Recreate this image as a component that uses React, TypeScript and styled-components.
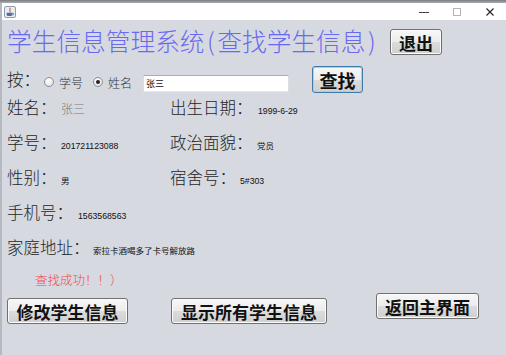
import React from "react"
import styled, { createGlobalStyle } from "styled-components"

const GlobalStyle = createGlobalStyle`
	html, body {
		margin: 0;
		padding: 0;
		background: #d6d9e0;
	}
	body {
		font-family: "Noto Sans CJK SC", sans-serif;
	}
	* {
		box-sizing: border-box;
	}
`

const CJK = `"Noto Sans CJK SC", sans-serif`
const LATIN = `"Liberation Sans", "Noto Sans CJK SC", sans-serif`

const Frame = styled.div`
	width: 506px;
	height: 355px;
	display: flex;
	flex-direction: column;
	overflow: hidden;
	background: #d6d9e0;
`

const TopStrip = styled.div`
	height: 3px;
	background: linear-gradient(#7a7d82, #a9acb1);
`

const Body = styled.div`
	flex: 1;
	display: flex;
	flex-direction: column;
	border-left: 2px solid #b6b9c0;
`

const TitleBar = styled.div`
	height: 17px;
	display: flex;
	align-items: center;
	justify-content: space-between;
	background: #ffffff;
	padding: 0 11px 0 2px;
`

const Controls = styled.div`
	display: flex;
	align-items: center;
	gap: 23px;
`

const Content = styled.div`
	flex: 1;
	display: flex;
	flex-direction: column;
	padding-left: 5px;
`

const HeaderRow = styled.div`
	height: 40px;
	display: flex;
	align-items: center;
`

const Title = styled.div`
	width: 383px;
	font-family: ${CJK};
	font-size: 24.7px;
	font-weight: 300;
	line-height: 30px;
	color: #6a6af0;
	white-space: nowrap;
`

// the original font gives the ascii parens a wider box
const Paren = styled.span`
	margin: 0 2.5px;
`

const Button = styled.button<{ $w: number; $h?: number; $size?: number; $mt?: number; $ml?: number; $focus?: boolean }>`
	width: ${(p) => p.$w}px;
	height: ${(p) => p.$h ?? 26}px;
	margin-top: ${(p) => p.$mt ?? 0}px;
	margin-left: ${(p) => p.$ml ?? 0}px;
	padding: 0;
	display: flex;
	align-items: center;
	justify-content: center;
	font-family: ${CJK};
	font-size: ${(p) => p.$size ?? 17}px;
	font-weight: 700;
	color: #111;
	background: linear-gradient(#f7f7f7 0%, #ececec 50%, #dcdcdc 51%, #cfcfcf 100%);
	border: 1px solid ${(p) => (p.$focus ? "#3d7bad" : "#707070")};
	border-radius: 3px;
	box-shadow: ${(p) => (p.$focus ? "inset 0 0 0 1px #9fd3f2" : "inset 0 0 0 1px #fbfbfb")};
	white-space: nowrap;
`

const SearchRow = styled.div`
	height: 35px;
	padding-top: 4px;
	display: flex;
	align-items: center;
`

const Label = styled.span<{ $w: number }>`
	width: ${(p) => p.$w}px;
	flex: none;
	font-family: ${CJK};
	font-size: 16.5px;
	font-weight: 300;
	line-height: 25px;
	color: #262626;
	white-space: nowrap;
`

const RadioOption = styled.label<{ $w: number }>`
	width: ${(p) => p.$w}px;
	margin-top: 5px;
	display: flex;
	align-items: center;
	gap: 5px;
	font-family: ${CJK};
	font-size: 12px;
	font-weight: 300;
	color: #333;
	white-space: nowrap;
`

const RadioCircle = styled.span<{ $checked?: boolean }>`
	width: 10px;
	height: 10px;
	border-radius: 50%;
	border: 1px solid #8e8f8f;
	background: radial-gradient(circle at 40% 35%, #ffffff 0%, #e6e6e6 70%, #d0d0d0 100%);
	display: flex;
	align-items: center;
	justify-content: center;
	&::after {
		content: "";
		width: 4px;
		height: 4px;
		border-radius: 50%;
		background: ${(p) => (p.$checked ? "#222" : "transparent")};
	}
`

const TextField = styled.div`
	width: 146px;
	height: 17px;
	margin-top: 8px;
	padding-left: 2px;
	display: flex;
	align-items: center;
	background: #ffffff;
	border: 1px solid #abadb3;
	border-left-color: #dadee3;
	border-right-color: #dadee3;
	border-bottom-color: #e3e9ef;
	font-family: ${CJK};
	font-size: 9px;
	color: #111;
`

const InfoRow = styled.div`
	height: 35px;
	display: flex;
	align-items: baseline;
`

const Cell = styled.div<{ $w?: number }>`
	width: ${(p) => (p.$w ? `${p.$w}px` : "auto")};
	flex: none;
	display: flex;
	align-items: baseline;
`

const Value = styled.span<{ $muted?: boolean; $latin?: boolean }>`
	font-family: ${(p) => (p.$latin ? LATIN : CJK)};
	font-size: ${(p) => (p.$muted ? 12 : p.$latin ? 8.7 : 8.5)}px;
	font-weight: ${(p) => (p.$muted ? 300 : 400)};
	color: ${(p) => (p.$muted ? "#7a7a7a" : "#111")};
	white-space: nowrap;
`

const Message = styled.div`
	height: 20px;
	padding-left: 28px;
	font-family: ${CJK};
	font-size: 12.5px;
	font-weight: 300;
	line-height: 20px;
	color: #f24a4a;
`

const ButtonRow = styled.div`
	display: flex;
	align-items: flex-start;
`

const JavaIcon = () => (
	<svg width="12" height="12" viewBox="0 0 12 12">
		<rect x="0.5" y="0.5" width="11" height="11" rx="1.5" fill="#e9edf3" stroke="#8e9db2" />
		<path d="M5.5 1.8 C7.6 3.4 4.4 4.4 6.4 6.2" stroke="#e0701c" strokeWidth="1.2" fill="none" />
		<path d="M2.6 6.8 h5.6 v1.6 a1.6 1.6 0 0 1 -1.6 1.6 h-2.4 a1.6 1.6 0 0 1 -1.6 -1.6z" fill="#4f6f9e" />
		<path d="M8.2 7.2 h0.8 a0.8 0.8 0 0 1 0 1.6 h-0.8" stroke="#4f6f9e" strokeWidth="0.8" fill="none" />
	</svg>
)

const MinimizeIcon = () => (
	<svg width="10" height="10" viewBox="0 0 10 10">
		<line x1="0" y1="5.5" x2="10" y2="5.5" stroke="#444" strokeWidth="1" />
	</svg>
)

const MaximizeIcon = () => (
	<svg width="10" height="10" viewBox="0 0 10 10">
		<rect x="1.5" y="1.5" width="7" height="7" fill="none" stroke="#b5b5b5" strokeWidth="1" />
	</svg>
)

const CloseIcon = () => (
	<svg width="10" height="10" viewBox="0 0 10 10">
		<path d="M1.5 1.5 L8.5 8.5 M8.5 1.5 L1.5 8.5" stroke="#222" strokeWidth="1.1" />
	</svg>
)

export default function App() {
	return (
		<>
			<GlobalStyle />
			<Frame>
				<TopStrip />
				<Body>
					<TitleBar>
						<JavaIcon />
						<Controls>
							<MinimizeIcon />
							<MaximizeIcon />
							<CloseIcon />
						</Controls>
					</TitleBar>
					<Content>
						<HeaderRow>
							<Title>
								学生信息管理系统<Paren>(</Paren>查找学生信息<Paren>)</Paren>
							</Title>
							<Button $w={52} $mt={4}>
								退出
							</Button>
						</HeaderRow>

						<SearchRow>
							<Label $w={37}>按：</Label>
							<RadioOption $w={49}>
								<RadioCircle />
								学号
							</RadioOption>
							<RadioOption $w={50}>
								<RadioCircle $checked />
								姓名
							</RadioOption>
							<TextField>张三</TextField>
							<Button $w={51} $h={27} $size={18} $ml={23} $focus>
								查找
							</Button>
						</SearchRow>

						<InfoRow>
							<Cell $w={163}>
								<Label $w={54}>姓名：</Label>
								<Value $muted>张三</Value>
							</Cell>
							<Cell>
								<Label $w={88}>出生日期：</Label>
								<Value $latin>1999-6-29</Value>
							</Cell>
						</InfoRow>
						<InfoRow>
							<Cell $w={163}>
								<Label $w={54}>学号：</Label>
								<Value $latin>201721123088</Value>
							</Cell>
							<Cell>
								<Label $w={87}>政治面貌：</Label>
								<Value>党员</Value>
							</Cell>
						</InfoRow>
						<InfoRow>
							<Cell $w={163}>
								<Label $w={54}>性别：</Label>
								<Value>男</Value>
							</Cell>
							<Cell>
								<Label $w={70}>宿舍号：</Label>
								<Value $latin>5#303</Value>
							</Cell>
						</InfoRow>
						<InfoRow>
							<Cell>
								<Label $w={71}>手机号：</Label>
								<Value $latin>1563568563</Value>
							</Cell>
						</InfoRow>
						<InfoRow>
							<Cell>
								<Label $w={86}>家庭地址：</Label>
								<Value>索拉卡酒喝多了卡号解放路</Value>
							</Cell>
						</InfoRow>

						<Message>查找成功！！）</Message>

						<ButtonRow>
							<Button $w={121} $mt={8}>
								修改学生信息
							</Button>
							<Button $w={156} $mt={8} $ml={43}>
								显示所有学生信息
							</Button>
							<Button $w={103} $mt={3} $ml={49}>
								返回主界面
							</Button>
						</ButtonRow>
					</Content>
				</Body>
			</Frame>
		</>
	)
}
